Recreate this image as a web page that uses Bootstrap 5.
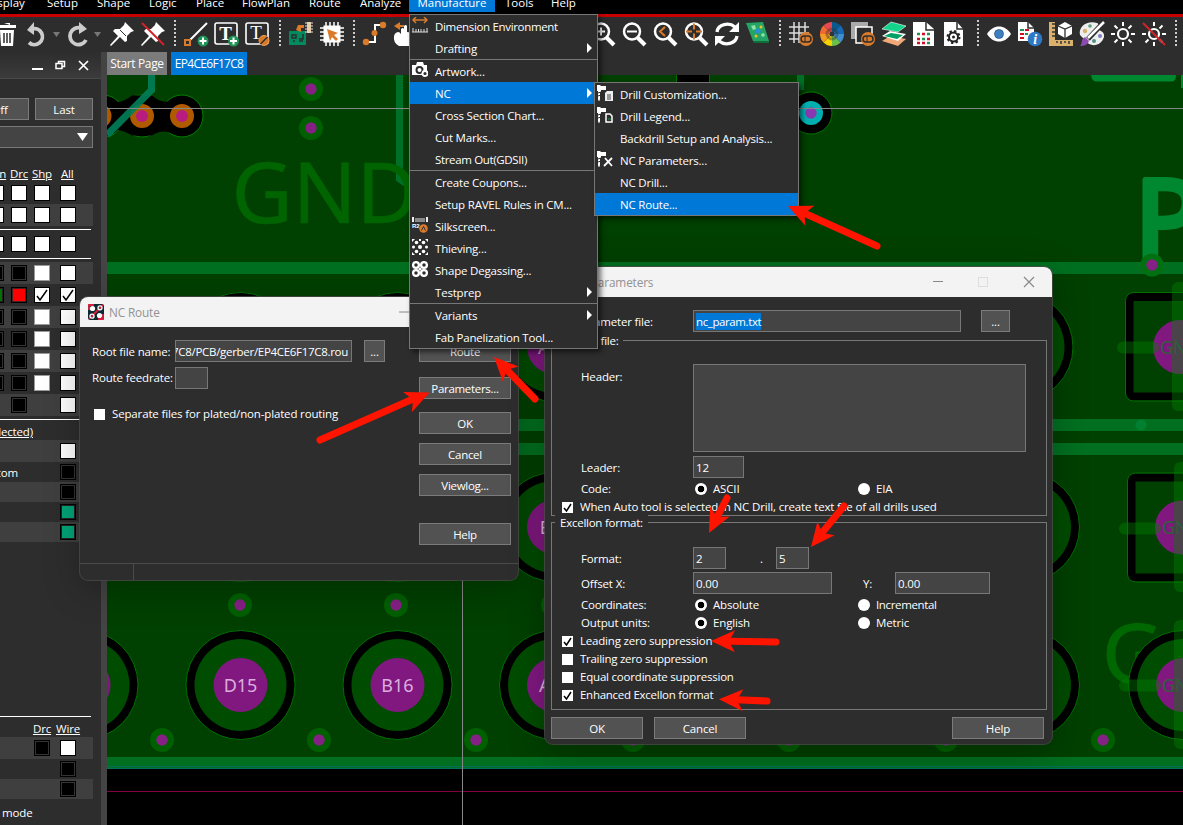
<!DOCTYPE html>
<html lang="en">
<head>
<meta charset="utf-8">
<title>PCB Editor</title>
<link href="https://cdn.jsdelivr.net/npm/bootstrap@5.3.0/dist/css/bootstrap.min.css" rel="stylesheet">
<style>
body{width:1183px;height:825px;overflow:hidden;background:#000;color:#fff;font:11.5px/16px "Open Sans","Noto Sans",sans-serif;letter-spacing:-.15px;position:relative}
.menubar{height:14px;background:#000;letter-spacing:0}
.menubar span{position:relative;top:-6px;white-space:nowrap;line-height:17px}
.menubar .hot{background:#0078d7;height:18px}
.redline{height:3px;background:#c80000}
.tools{height:35px;background:#2d2d2d;padding-top:5px;overflow:hidden}
.tools svg{width:24px;height:24px;margin:0 4px 0 3px;flex:none;overflow:visible}
.dots{width:12px;height:26px;flex:none;margin-top:-2px;background:repeating-linear-gradient(#ccc 0 2px,transparent 2px 4px) 5px 0/2px 26px no-repeat}
.caret{flex:none;height:6px;margin-top:10px;background:linear-gradient(#777,#777) no-repeat;clip-path:polygon(0 0,7px 0,3.5px 5px)}
.side{width:101px;background:#2d2d2d;overflow:hidden;flex:none}
.splitter{width:6px;background:#444;flex:none}
.sidehead{height:27px;background:linear-gradient(#2d2d2d,#3b3b3b);border-bottom:1px solid #484848}
.box{border:1px solid #777;background:#444;height:22px;overflow:hidden;white-space:nowrap;line-height:22px;color:#fff}
.push{border:1px solid #7b7b7b;background:#525252;height:22px;line-height:22px;text-align:center;color:#fff;flex:none}
.lay{height:22px;width:93px;display:flex;align-items:center;overflow:hidden;position:relative}
.lay.s{height:20px}.lay.alt{background:#3f3f3f}
.cells{display:grid;grid-template-columns:23px 23px 26px 16px;margin-left:-12px}
.cells i{width:16px;height:16px;display:block;border:1px solid #000;background:#fff;color:#000}
.cells i.k{background:#000;box-shadow:inset 0 0 0 1px #333}
.cells i.g{border-color:#999}
.cells i.r{background:red;box-shadow:inset 0 0 0 1px #422}
.cells i.gr{background:#007000;box-shadow:inset 0 0 0 1px #222}
.cells i.t{background:#00a478;box-shadow:inset 0 0 0 1px #222}
.cells i.n{visibility:hidden}
.cells svg{display:block}
.rule{height:1px;background:#fff;width:91px}
.work{min-width:0}
.tabs{height:23px;background:#2d2d2d;gap:4px;line-height:24px;font-size:12px;white-space:nowrap}
.tabs div{text-align:center;letter-spacing:-.35px}
.tabs div+div{letter-spacing:-.7px}
.win{position:absolute;background:#2d2d2d;border-radius:8px;box-shadow:0 0 0 1px #4a4a4acc,0 8px 36px rgba(0,0,0,.28)}
.cap{height:30px;background:#f3f3f3;border-radius:8px 8px 0 0;color:#929292;font-size:11.8px}
.chk{width:11px;height:11px;background:#fff;flex:none;color:#000;display:block}
.rad{width:12px;height:12px;border-radius:50%;background:#fff;flex:none;display:block}
.rad.on{background:radial-gradient(circle,#000 0 3px,#fff 3.6px)}
.fs{border:1px solid #777;position:relative}
.fs>b{position:absolute;top:-8px;background:#2d2d2d;font-weight:400;padding:0 5px;white-space:nowrap;letter-spacing:-.25px}
.line{display:grid;align-items:center;white-space:nowrap}
.fld>span{padding-top:1px}
.opt{gap:7px;height:18px;letter-spacing:-.2px}
.pop{position:absolute;background:#2d2d2d;border:1px solid #777;box-shadow:3px 3px 5px rgba(0,0,0,.55)}
.it{height:22px;display:flex;align-items:center;white-space:nowrap;position:relative;letter-spacing:-.2px;padding-top:2px}
.it svg{width:16px;height:16px;margin:-4px 7px 0 2px;flex:none}
.it.p{padding-left:25px}
.it.hot{background:#0078d7}
.it.sub::after{content:"";margin-left:auto;margin-right:5px;margin-top:-3px;border:5px solid transparent;border-left-color:#fff;border-right:0}
.sep{height:1px;background:#777}
.over{position:absolute;left:0;top:0;pointer-events:none}
</style>
</head>
<body class="d-flex flex-column">
<nav class="menubar d-flex flex-none">
<span style="width:47px;margin-left:-14px">Display</span><span style="width:50px;margin-left:14px">Setup</span><span style="width:52px">Shape</span><span style="width:47px">Logic</span><span style="width:46px">Place</span><span style="width:67px">FlowPlan</span><span style="width:51px">Route</span><span style="width:49px">Analyze</span><span class="hot text-center" style="width:86px">Manufacture</span><span style="margin-left:10px;width:46px">Tools</span><span>Help</span>
</nav>
<div class="redline"></div>
<div class="tools d-flex">
<svg viewBox="0 0 24 24" style="margin-left:-5px;margin-right:3px"><path d="M3 3h18v3H3zM9 1h6v2M5 8h14l-1 16H6z" fill="#fff"/><path d="M9 11v10M12 11v10M15 11v10" stroke="#2d2d2d" stroke-width="1.5"/></svg>
<svg viewBox="0 0 24 24"><path d="M4 20.500A8 8 0 1 0 7 7" fill="none" stroke="#ccc" stroke-width="3.800"/><path d="M9 0v13L2 8z" fill="#ccc"/></svg>
<div class="caret" style="width:10px"></div>
<svg viewBox="0 0 24 24"><path d="M20 18A8.500 8.500 0 1 1 15 6" fill="none" stroke="#ccc" stroke-width="3.800"/><path d="M13 0v12l8-5z" fill="#ccc"/></svg>
<div class="caret" style="width:13px"></div>
<svg viewBox="0 0 24 24"><path d="M15 0l9 9-3 1-4 4v5l-2 1-5-5-9 9-1-1 8-9-5-5 2-2h5l4-4z" fill="#fff"/><path d="M10 8l6 6" stroke="#2d2d2d"/></svg>
<svg viewBox="0 0 24 24"><path d="M15 0l9 9-3 1-4 4v5l-2 1-5-5-9 9-1-1 8-9-5-5 2-2h5l4-4z" fill="#fff"/><path d="M1 1l22 22" stroke="#d2232a" stroke-width="2"/></svg>
<div class="dots"></div>
<svg viewBox="0 0 24 24"><path d="M3 21L23 1" stroke="#fff" stroke-width="2"/><path d="M1 18h5v5H1z" fill="#2d2d2d" stroke="#d97b2b" stroke-width="2"/><circle cx="19" cy="19" r="5.5" fill="#1e9356"/><path d="M15.5 19h7M19 15.500v7" stroke="#fff" stroke-width="2"/></svg>
<svg viewBox="0 0 24 24"><rect x="0" y="1" width="22" height="21" rx="2" fill="none" stroke="#fff" stroke-width="1.600"/><text x="10.500" y="18" text-anchor="middle" font-family="Liberation Serif" font-weight="bold" font-size="19" fill="#fff">T</text><circle cx="18.500" cy="19" r="5.500" fill="#1e9356"/><path d="M15 19h7M18.500 15.500v7" stroke="#fff" stroke-width="2"/></svg>
<svg viewBox="0 0 24 24"><rect x="0" y="1" width="22" height="21" rx="2" fill="none" stroke="#fff" stroke-width="1.600"/><text x="10" y="17" text-anchor="middle" font-family="Liberation Serif" font-size="19" fill="#fff">T</text><circle cx="18" cy="18.500" r="5" fill="#d97b2b" stroke="#f0a050"/><path d="M14.500 22l7-7" stroke="#2d2d2d" stroke-width="1.500"/></svg>
<div class="dots"></div>
<svg viewBox="0 0 24 24"><path d="M0 9h17v14H0z" fill="#008a5e"/><path d="M3 13h4v3H3zM10 19h4M14 12v5h-4M5 20v-2" fill="none" stroke="#2d2d2d" stroke-width="1.500"/><path d="M7 8l2-5h6v3h-3v4z" fill="#d97b2b"/><path d="M18 0h4v11h-4z" fill="#e8c890"/><path d="M16 1h8M16 4h8M16 7h8M16 10h8" stroke="#ddd"/></svg>
<svg viewBox="0 0 24 24"><path d="M3.500 3.500h17v17h-17z" fill="#fff"/><path d="M6 0v24M10 0v24M14 0v24M18 0v24M0 6h24M0 10h24M0 14h24M0 18h24" stroke="#fff" stroke-width="1.500"/><path d="M7 7l11 4-4 2 4 4-2 2-4-4-2 4z" fill="#d97b2b"/></svg>
<div class="dots"></div>
<svg viewBox="0 0 24 24"><path d="M3 20h9V11V3h8" fill="none" stroke="#fff" stroke-width="2"/><g fill="#d97b2b"><circle cx="3" cy="20" r="3.200"/><circle cx="11.500" cy="11" r="3"/><circle cx="20" cy="3" r="3.200"/></g></svg>
<svg viewBox="0 0 24 24"><path d="M0 4l6-4v3h4v2H6v3z" fill="#d97b2b"/><path d="M7 12V7q2-2 3 0v-3q2-2 3 0v6l8 1v13H5Q-1 21 0 14q1-4 5-4z" fill="#fff"/></svg>
<div style="width:166px" class="flex-shrink-0"></div>
<svg viewBox="0 0 24 24"><circle cx="10" cy="9.500" r="8" fill="none" stroke="#fff" stroke-width="2.500"/><path d="M15 15l8 8" stroke="#fff" stroke-width="4"/><path d="M6 9.500h8M10 5.500v8" stroke="#fff" stroke-width="2"/></svg>
<svg viewBox="0 0 24 24"><circle cx="10" cy="9.500" r="8" fill="none" stroke="#fff" stroke-width="2.500"/><path d="M15 15l8 8" stroke="#fff" stroke-width="4"/><path d="M5 9.500h10" stroke="#fff" stroke-width="2"/></svg>
<svg viewBox="0 0 24 24"><circle cx="10" cy="9.500" r="8" fill="none" stroke="#fff" stroke-width="2.500"/><path d="M15 15l8 8" stroke="#fff" stroke-width="4"/><path d="M12 5L7 9.500l5 4.500" fill="none" stroke="#d97b2b" stroke-width="2"/></svg>
<svg viewBox="0 0 24 24"><circle cx="10" cy="9.500" r="8" fill="none" stroke="#fff" stroke-width="2.500"/><path d="M15 15l8 8" stroke="#fff" stroke-width="4"/><path d="M2 9.500h6M12 9.500h6M10 1.500v6M10 11.500v6" stroke="#d97b2b" stroke-width="2"/></svg>
<svg viewBox="0 0 24 24"><path d="M2 10c1-8 12-10 18-5M22 14c-1 8-12 10-18 5" fill="none" stroke="#fff" stroke-width="3.300"/><path d="M24 0v10H14zM0 24V14h10z" fill="#fff"/></svg>
<svg viewBox="0 0 24 24"><path d="M0 1l17-1 6 19H7z" fill="#23a566"/><path d="M7 19h16v2H8z" fill="#136b3c"/><path d="M5 4l4-1 1 4-3 1zM15 12l3-1 1 3-3 1z" fill="#8fe0a8"/><circle cx="12" cy="9" r="2.500" fill="#2b8fd8"/><circle cx="10" cy="14" r="1.500" fill="#f0c020"/><circle cx="15" cy="5" r="1.500" fill="#f0c020"/></svg>
<div class="dots"></div>
<svg viewBox="0 0 24 24"><path d="M0 5h20M0 11h20M0 17h12M5 0v21M10 0v21M16 0v14" stroke="#ddd" stroke-width="1.500"/><circle cx="17" cy="17" r="7" fill="#d97b2b"/><rect x="12" y="14" width="10" height="6" rx="3" fill="none" stroke="#2d2d2d" stroke-width="1.500"/><path d="M16 14v6" stroke="#2d2d2d"/></svg>
<svg viewBox="0 0 24 24"><path d="M12 12V0A12 12 0 0 1 20.500 3.500z" fill="#0a5a90"/><path d="M12 12L20.500 3.500A12 12 0 0 1 24 12z" fill="#1769b3"/><path d="M12 12H24A12 12 0 0 1 20.500 20.500z" fill="#3e8fd0"/><path d="M12 12L20.500 20.500A12 12 0 0 1 12 24z" fill="#6cbf4a"/><path d="M12 12V24A12 12 0 0 1 3.500 20.500z" fill="#f5d400"/><path d="M12 12L3.500 20.500A12 12 0 0 1 0 12z" fill="#f59a23"/><path d="M12 12H0A12 12 0 0 1 3.500 3.500z" fill="#f06a30"/><path d="M12 12L3.500 3.500A12 12 0 0 1 12 0z" fill="#e84850"/><circle cx="12" cy="12" r="5" fill="none" stroke="#333" stroke-opacity=".4" stroke-width="3"/><circle cx="12" cy="12" r="2.500" fill="#333"/></svg>
<svg viewBox="0 0 24 24"><path d="M0 0h17v17H0z" fill="#aaa"/><path d="M5 5h16v16H5z" fill="#2d2d2d" stroke="#fff" stroke-width="1.500"/><circle cx="17" cy="17" r="7" fill="#d97b2b"/><rect x="12" y="14" width="10" height="6" rx="3" fill="none" stroke="#2d2d2d" stroke-width="1.500"/><path d="M16 14v6" stroke="#2d2d2d"/></svg>
<svg viewBox="0 0 24 24"><path d="M0 19l8-5 16 3-8 7z" fill="#f0a878"/><path d="M0 14l8-5 16 3-8 7z" fill="#fff"/><path d="M2 14l7-3 12 2-6 4z" fill="#00a065"/><path d="M0 7l9-7 15 4-8 6z" fill="#12d48a" stroke="#fff" stroke-width=".6"/></svg>
<svg viewBox="0 0 24 24"><path d="M0 0h13l8 7v17H0z" fill="#fff"/><path d="M13 0v8h8" fill="none" stroke="#2d2d2d" stroke-width="1.500"/><path d="M4 12h3M14 12h3M9 17h3" stroke="#1e9356" stroke-width="2.500"/><path d="M9 12h3M4 17h3M14 17h3M4 21h3M9 21h3" stroke="#d01020" stroke-width="2.500"/><path d="M14 21h3" stroke="#1e9356" stroke-width="2.500"/></svg>
<svg viewBox="0 0 24 24"><path d="M0 0h13l6 7v17H0z" fill="#fff"/><path d="M13 0v7h6" fill="none" stroke="#2d2d2d" stroke-width="1.500"/><circle cx="9.500" cy="15" r="4.500" fill="none" stroke="#222" stroke-width="2"/><circle cx="9.500" cy="15" r="6" fill="none" stroke="#222" stroke-width="2" stroke-dasharray="2.300 2.400"/><circle cx="9.500" cy="15" r="1.500" fill="#222"/></svg>
<div class="dots"></div>
<svg viewBox="0 0 24 24"><path d="M0 12C6 2 18 2 24 12 18 22 6 22 0 12" fill="#fff"/><circle cx="12" cy="12" r="4.800" fill="#1f4f80"/><circle cx="12" cy="12" r="4" fill="#3f7fc0"/></svg>
<svg viewBox="0 0 24 24"><path d="M0 0h10l6 6v13H0z" fill="#fff"/><path d="M10 0v6h6" fill="none" stroke="#2d2d2d" stroke-width="1.500"/><path d="M2 8h4M7 12h3" stroke="#1e9356" stroke-width="2"/><path d="M7 8h4M2 12h4M2 16h4" stroke="#d01020" stroke-width="2"/><circle cx="17" cy="17" r="7.300" fill="#2f78c4"/><text x="17" y="22" text-anchor="middle" font-family="Liberation Serif" font-style="italic" font-weight="bold" font-size="14" fill="#fff">i</text></svg>
<svg viewBox="0 0 24 24"><path d="M0 0h6v18h18v6H0z" fill="#d9b06c"/><path d="M3 2h3M3 6h3M3 10h3M3 14h3M8 19v2M12 19v3M16 19v2M20 19v3" stroke="#333" stroke-width="1.500"/><path d="M16 0l7 4v8l-7 4-7-4V4z" fill="#fff"/><path d="M9 4l7 3 7-3M16 7v9" fill="none" stroke="#2d2d2d" stroke-width="1.300"/></svg>
<svg viewBox="0 0 24 24"><path d="M0 13C-2 4 8-2 17 1c3 1 0 4 1 6s7 2 6 8c-2 7-9 10-15 7z" fill="#eee"/><circle cx="5" cy="9" r="2.200" fill="#d9b06c"/><circle cx="10" cy="4" r="1.800" fill="#60a080"/><circle cx="14" cy="19" r="2" fill="#509080"/><circle cx="20" cy="14" r="2" fill="#8080c0"/><path d="M24 0L8 17" stroke="#2d2d2d" stroke-width="5"/><path d="M24 0L8 16" stroke="#fff" stroke-width="2.500"/><path d="M0 24c3-3 0-6 5-9l4 4c-1 4-5 5-9 5" fill="#8b4bb0"/></svg>
<svg viewBox="0 0 24 24"><circle cx="12" cy="12" r="5" fill="none" stroke="#fff" stroke-width="2.200"/><path d="M12 0v4M12 20v4M0 12h4M20 12h4M3.500 3.500l3 3M17.500 17.500l3 3M3.500 20.500l3-3M17.500 6.500l3-3" stroke="#fff" stroke-width="2"/></svg>
<svg viewBox="0 0 24 24"><circle cx="12" cy="12" r="5" fill="none" stroke="#fff" stroke-width="2.200"/><path d="M12 0v4M12 20v4M0 12h4M20 12h4M17.500 17.500l3 3M3.500 20.500l3-3M17.500 6.500l3-3" stroke="#fff" stroke-width="2"/><path d="M1 1l22 22" stroke="#d2232a" stroke-width="2"/></svg>
<div class="dots"></div>
</div>

<main class="d-flex flex-grow-1" style="min-height:0">
<aside class="side">
<div class="sidehead"><svg width="101" height="26"><path d="M32 17h11" stroke="#fff" stroke-width="2"/><path d="M56 11.500h6v5h-6zM58.500 11V9.500h6v5H62" fill="none" stroke="#fff" stroke-width="1.500"/><path d="M79 9l9 9M88 9l-9 9" stroke="#fff" stroke-width="1.700"/></svg></div>
<div class="d-flex" style="padding-top:19px;gap:6px"><div class="push" style="width:59px;margin-left:-30px">Off</div><div class="push" style="width:58px">Last</div></div>
<div class="box" style="width:103px;margin:6px 0 0 -10px"><svg width="101" height="20" class="d-block"><path d="M86 6h11l-5.500 8z" fill="#fff"/></svg></div>
<div class="d-flex text-decoration-underline" style="height:34px;padding-top:18px"><span style="width:17px;margin-left:-7px">En</span><span style="width:22px">Drc</span><span style="width:29px">Shp</span><span>All</span></div>
<div class="lay"><div class="cells"><i></i><i></i><i></i><i></i></div></div>
<div class="lay alt"><div class="cells"><i></i><i></i><i></i><i></i></div></div>
<div class="rule" style="margin:3px 0"></div>
<div class="lay"><div class="cells"><i></i><i></i><i></i><i></i></div></div>
<div class="rule" style="margin:3px 0"></div>
<div class="lay alt"><div class="cells"><i class="k"></i><i class="k"></i><i class="g"></i><i></i></div></div>
<div class="lay"><div class="cells"><i class="gr"></i><i class="r"></i><i><svg width="14" height="14"><path d="M2 8l3 4 7-10" fill="none" stroke="#000" stroke-width="1.500"/></svg></i><i><svg width="14" height="14"><path d="M2 8l3 4 7-10" fill="none" stroke="#000" stroke-width="1.500"/></svg></i></div></div>
<div class="lay alt"><div class="cells"><i class="k"></i><i class="k"></i><i class="g"></i><i></i></div></div>
<div class="lay"><div class="cells"><i class="k"></i><i class="k"></i><i class="g"></i><i></i></div></div>
<div class="lay alt"><div class="cells"><i class="k"></i><i class="k"></i><i class="g"></i><i></i></div></div>
<div class="lay"><div class="cells"><i class="k"></i><i class="k"></i><i class="g"></i><i></i></div></div>
<div class="lay alt"><div class="cells"><i class="n"></i><i class="k"></i><i class="n"></i><i></i></div></div>
<div class="rule" style="margin:3px 0 2px"></div>
<div class="text-decoration-underline" style="height:18px;line-height:20px;width:33px;direction:rtl;white-space:nowrap"><bdi dir="ltr">(Selected)</bdi></div>
<div class="lay alt"><div class="cells"><i class="n"></i><i class="n"></i><i class="n"></i><i></i></div></div>
<div class="lay s"><div class="cells"><i class="n"></i><i class="n"></i><i class="n"></i><i class="k"></i></div><span class="position-absolute" style="right:75px;top:3px">Bottom</span></div>
<div class="lay s alt"><div class="cells"><i class="n"></i><i class="n"></i><i class="n"></i><i class="k"></i></div></div>
<div class="lay s"><div class="cells"><i class="n"></i><i class="n"></i><i class="n"></i><i class="t"></i></div></div>
<div class="lay s alt"><div class="cells"><i class="n"></i><i class="n"></i><i class="n"></i><i class="t"></i></div></div>
<div class="rule" style="margin:174px 0 4px"></div>
<div class="d-flex text-decoration-underline" style="height:16px;padding-left:33px"><span style="width:23px">Drc</span><span>Wire</span></div>
<div class="lay alt"><div class="cells"><i class="n"></i><i class="n"></i><i class="k"></i><i></i></div></div>
<div class="lay s"><div class="cells"><i class="n"></i><i class="n"></i><i class="n"></i><i class="k"></i></div></div>
<div class="lay s alt"><div class="cells"><i class="n"></i><i class="n"></i><i class="n"></i><i class="k"></i></div></div>
<div style="padding:6px 0 0 2px">mode</div>
</aside>
<div class="splitter"></div>
<section class="work flex-grow-1">
<div class="tabs d-flex"><div style="width:60px;background:#7b7b7b">Start Page</div><div style="width:76px;background:#0078d7">EP4CE6F17C8</div></div>
<svg class="d-block" width="1076" height="750" viewBox="107 75 1076 750" font-family="Noto Sans" letter-spacing="0">
<defs>
<g id="ring"><circle r="54.500" fill="#000" stroke="#007000"/><circle r="46" fill="#004c00"/><circle r="27" fill="#801880"/></g>
<g id="via"><circle r="12" fill="#006000"/><circle r="5.700" fill="#852085"/></g>
</defs>
<rect x="107" y="75" width="1076" height="694" fill="#004000"/>
<path d="M107 268H1183M107 425H1183M107 449H1183M107 763H1183" stroke="#007020" stroke-width="12"/>
<path d="M107 768.500H1183M107 766.500H1183" stroke="#00705a"/>
<path d="M107 791.500H1183" stroke="#800040"/>
<g fill="#000" stroke="#008000" stroke-width="1"><circle cx="103" cy="116" r="21"/><circle cx="142" cy="116" r="21"/><circle cx="182" cy="116" r="21"/></g>
<path d="M107 102.500q14 2 25-7h20q10 9 20 5h10v33h-10q-10-5-20 2h-20q-12-8-25-5z" fill="#000"/>
<g fill="#b05a00"><circle cx="99.500" cy="116" r="12"/><circle cx="142" cy="116" r="12"/><circle cx="182" cy="116" r="12"/></g>
<path d="M151.500 75v15L107 135" stroke="#00805a" stroke-opacity=".9" stroke-width="7" fill="none"/>
<circle cx="142" cy="116" r="6" fill="#b81c80"/><circle cx="182" cy="116" r="6" fill="#b81c80"/>
<use href="#via" x="311" y="89"/><use href="#via" x="311" y="128"/>
<path d="M399.500 75v104l6 4" stroke="#007028" stroke-width="7" fill="none"/><path d="M800.500 75v15" stroke="#007028" stroke-width="7"/>
<text x="231.500" y="223" font-size="84" fill="#006400" stroke="#006400" stroke-width=".5">GND</text>
<rect x="676.500" y="70" width="33" height="13" fill="#000" stroke="#007000"/>
<circle cx="811" cy="113" r="21" fill="#000" stroke="#007000"/><circle cx="811" cy="113" r="12" fill="#00b0b0"/><circle cx="811" cy="113" r="5.700" fill="#8838b0"/>
<path d="M1091 75h85q0 6-4 6.500h-76q-4 0-5-6.500M1181 75h2v13h-2z" fill="#008830"/>
<text x="1135" y="257" font-size="108" fill="#008830" stroke="#008830" stroke-width="6" stroke-linejoin="round">P</text>
<circle cx="1152" cy="265" r="11.500" fill="#007010"/><circle cx="1152" cy="265" r="5.700" fill="#852085"/>
<path d="M107 108.500H1183" stroke="#888"/>
<use href="#ring" x="240.500" y="347"/><use href="#ring" x="397.500" y="347"/><use href="#ring" x="554" y="347"/><use href="#ring" x="1018.500" y="347"/>
<use href="#ring" x="240.500" y="527"/><use href="#ring" x="397.500" y="527"/><use href="#ring" x="554" y="527"/><use href="#ring" x="1025" y="527"/>
<use href="#ring" x="83.500" y="685"/><use href="#ring" x="240.500" y="685"/><use href="#ring" x="397.500" y="685"/><use href="#ring" x="554" y="685"/><use href="#ring" x="1025" y="685"/>
<g fill="#dcaede" font-size="18" text-anchor="middle"><text x="240.500" y="692">D15</text><text x="397.500" y="692">B16</text><text x="555" y="692">A15</text><text x="556" y="534">B14</text><text x="554" y="354">A14</text></g>
<use href="#via" x="240" y="605"/><use href="#via" x="396" y="605"/><use href="#via" x="553" y="605"/>
<use href="#via" x="162" y="740"/><use href="#via" x="319" y="740"/><use href="#via" x="476" y="740"/><use href="#via" x="633" y="740"/><use href="#via" x="789" y="740"/><use href="#via" x="946" y="740"/><use href="#via" x="1103" y="740"/>
<circle cx="1141" cy="425" r="5.500" fill="#008030"/>
<g fill="#004000" stroke="#000" stroke-width="8"><rect x="1129.500" y="297" width="100" height="99.500" rx="3"/><rect x="1131.500" y="477.500" width="100" height="100" rx="3"/></g>
<g fill="none" stroke="#007000"><rect x="1125.500" y="292.500" width="100" height="108.500" rx="8"/><rect x="1127.500" y="473" width="100" height="109" rx="8"/></g>
<text x="1102" y="683" font-size="83" fill="#006800" stroke="#006800">G</text>
<use href="#ring" x="1183" y="685"/>
<circle cx="1180" cy="347" r="27" fill="#801880"/><circle cx="1182" cy="527.500" r="27" fill="#801880"/>
<g stroke="#008000" stroke-opacity=".42" stroke-width="12" stroke-linecap="round"><path d="M1123 347.500h30M1125 528.500h30M1125 685.500h30" /></g>
<g fill="#008000" fill-opacity=".42"><rect x="1172" y="282" width="20" height="129" rx="6"/><rect x="1174" y="462" width="20" height="130" rx="6"/><rect x="1174" y="620" width="20" height="129" rx="6"/></g>
<g fill="#2c603c" font-size="18"><text x="1160" y="354">GND</text><text x="1162" y="534">GND</text><text x="1162" y="692">GND</text></g>
<path d="M462.500 75v750" stroke="#888"/>
</svg>
</section>
</main>

<!-- NC Route dialog -->
<div class="win" style="left:80px;top:297px;width:438px;height:283px">
<div class="cap d-flex align-items-center" style="padding-left:8px;gap:5px"><svg width="16" height="16" viewBox="0 0 16 16"><rect width="16" height="16" rx="2" fill="#0b2a33"/><path d="M1 15L15 1M1 6V1h5M15 10v5h-5" stroke="#d8203c" stroke-width="1.800" fill="none"/><circle cx="4.500" cy="4.500" r="2.600" fill="#fff"/><circle cx="11.500" cy="11.500" r="2.600" fill="#fff"/><circle cx="12" cy="3.800" r="2" fill="none" stroke="#fff" stroke-width="1.300"/><circle cx="4" cy="12.200" r="2" fill="none" stroke="#fff" stroke-width="1.300"/></svg><span style="width:52px">NC Route</span><svg width="11" height="2" style="margin-left:233px"><path d="M0 1h11" stroke="#888"/></svg></div>
<div class="d-flex justify-content-between" style="padding:13px 7px 0 12px;height:236px">
<div>
<div class="line fld" style="grid-template-columns:83px 177px 12px 21px;height:22px;margin-bottom:5px"><span>Root file name:</span><div class="box d-flex justify-content-end" style="padding-right:3px;letter-spacing:-.3px">17C8/PCB/gerber/EP4CE6F17C8.rou</div><span></span><div class="push">...</div></div>
<div class="line" style="grid-template-columns:83px 33px;height:22px"><span>Route feedrate:</span><div class="box"></div></div>
<div class="d-flex align-items-center" style="gap:7px;margin:17px 0 0 2px"><i class="chk"></i><span>Separate files for plated/non-plated routing</span></div>
</div>
<div class="d-flex flex-column" style="width:92px;letter-spacing:-.3px"><div class="push">Route</div><div class="push" style="margin-top:15px">Parameters...</div><div class="push" style="margin-top:13px">OK</div><div class="push" style="margin-top:9px">Cancel</div><div class="push" style="margin-top:9px">Viewlog...</div><div class="push" style="margin-top:27px">Help</div></div>
</div>
<div style="border-top:1px solid #4b4b4b;height:17px"><div style="width:54px;height:16px;border-right:1px solid #4b4b4b"></div></div>
</div>

<!-- NC Parameters dialog -->
<div class="win" style="left:545px;top:267px;width:507px;height:477px">
<div class="cap d-flex align-items-center" style="padding-left:27px"><span>NC Parameters</span><svg class="ms-auto" width="119" height="30"><path d="M0 14.500h10" stroke="#888"/><rect x="45.500" y="10.500" width="9" height="9" fill="none" stroke="#ddd"/><path d="M91 10l10 10M101 10l-10 10" stroke="#888" stroke-width="1.200"/></svg></div>
<div style="padding:13px 5px 0 6px">
<div class="line fld" style="grid-template-columns:102px 40px 268px 20px 29px;height:22px"><span class="text-end">Parameter file:</span><span></span><div class="box" style="padding:0 2px;letter-spacing:-.4px"><span style="background:#0078d7;padding:1px 0">nc_param.txt</span></div><span></span><div class="push">...</div></div>
<div class="fs" style="height:176px;margin-top:8px;padding:23px 0 0 10px"><b style="left:4px">Output file:</b>
<div class="d-flex"><span style="width:131px;padding:5px 0 0 19px">Header:</span><div class="box" style="width:333px;height:88px"></div></div>
<div class="line fld" style="grid-template-columns:131px 51px;height:22px;margin-top:4px"><span style="padding-left:19px">Leader:</span><div class="box" style="padding-left:2px">12</div></div>
<div class="line" style="grid-template-columns:133px 18px 145px 18px auto;justify-content:start;height:22px"><span style="padding-left:19px">Code:</span><i class="rad on"></i><span>ASCII</span><i class="rad"></i><span>EIA</span></div>
<div class="opt d-flex align-items-center" style="height:14px;letter-spacing:-.15px"><i class="chk"><svg class="d-block" width="11" height="11"><path d="M2 6l2.500 3L9 2" fill="none" stroke="#000" stroke-width="1.500"/></svg></i><span class="text-nowrap">When Auto tool is selected in NC Drill, create text file of all drills used</span></div>
</div>
<div class="fs" style="height:188px;margin-top:6px;padding:24px 0 0 10px"><b style="left:3px">Excellon format:</b>
<div class="line fld" style="grid-template-columns:131px 33px 50px 33px;height:22px"><span style="padding-left:19px">Format:</span><div class="box" style="padding-left:2px">2</div><span style="padding-left:34px">.</span><div class="box" style="padding-left:2px">5</div></div>
<div class="line fld" style="grid-template-columns:131px 139px 31px 32px 95px;height:22px;margin-top:3px"><span style="padding-left:19px">Offset X:</span><div class="box" style="padding-left:2px">0.00</div><span></span><span>Y:</span><div class="box" style="padding-left:2px">0.00</div></div>
<div class="line" style="grid-template-columns:133px 18px 145px 18px auto;justify-content:start;height:18px;margin-top:2px"><span style="padding-left:19px;letter-spacing:-.25px">Coordinates:</span><i class="rad on"></i><span>Absolute</span><i class="rad"></i><span style="letter-spacing:-.35px">Incremental</span></div>
<div class="line" style="grid-template-columns:133px 18px 145px 18px auto;justify-content:start;height:18px"><span style="padding-left:19px">Output units:</span><i class="rad on"></i><span>English</span><i class="rad"></i><span>Metric</span></div>
<div class="opt d-flex align-items-center"><i class="chk"><svg class="d-block" width="11" height="11"><path d="M2 6l2.500 3L9 2" fill="none" stroke="#000" stroke-width="1.500"/></svg></i><span>Leading zero suppression</span></div>
<div class="opt d-flex align-items-center"><i class="chk"></i><span style="letter-spacing:-.28px">Trailing zero suppression</span></div>
<div class="opt d-flex align-items-center"><i class="chk"></i><span>Equal coordinate suppression</span></div>
<div class="opt d-flex align-items-center"><i class="chk"><svg class="d-block" width="11" height="11"><path d="M2 6l2.500 3L9 2" fill="none" stroke="#000" stroke-width="1.500"/></svg></i><span style="letter-spacing:-.27px">Enhanced Excellon format</span></div>
</div>
<div class="d-flex" style="margin-top:7px;gap:11px;padding-right:3px"><div class="push" style="width:92px">OK</div><div class="push" style="width:92px">Cancel</div><div class="push ms-auto" style="width:92px">Help</div></div>
</div>
</div>

<!-- Manufacture menu -->
<div class="pop" style="left:409px;top:14px;width:189px;height:335px">
<div class="it" style="letter-spacing:-.33px"><svg viewBox="0 0 16 16"><path d="M1 3h14M4 0L1 3l3 3M12 0l3 3-3 3" fill="none" stroke="#d97b2b" stroke-width="1.500"/><path d="M0 15h16M1 11v4M4 12v3M6.500 12v3M9 12v3M12 12v3M15 11v4" stroke="#ddd"/></svg>Dimension Environment</div>
<div class="it p sub">Drafting</div><div class="sep"></div>
<div class="it"><svg viewBox="0 0 16 16"><path d="M0 3h4l1-3h6l1 3h3v10H0z" fill="#fff"/><circle cx="7.500" cy="8" r="3" fill="none" stroke="#2d2d2d" stroke-width="2"/><circle cx="13" cy="11.500" r="2.500" fill="#2d2d2d" stroke="#fff" stroke-width="1.800"/></svg>Artwork...</div>
<div class="it p hot sub">NC</div><div class="it p">Cross Section Chart...</div><div class="it p">Cut Marks...</div><div class="it p" style="letter-spacing:-.35px">Stream Out(GDSII)</div><div class="sep"></div>
<div class="it p">Create Coupons...</div><div class="it p">Setup RAVEL Rules in CM...</div>
<div class="it"><svg viewBox="0 0 16 16"><path d="M3 1h10v4H3z" fill="#888"/><path d="M1 0v5M15 0v5" stroke="#eee" stroke-width="2"/><text x="0" y="11" font-size="6" font-weight="bold" font-family="Liberation Sans" fill="#fff">R2</text><circle cx="11.500" cy="11.500" r="4.300" fill="#d97b2b"/><path d="M9.500 13.500l2-4 2 4" fill="none" stroke="#333"/></svg>Silkscreen...</div>
<div class="it"><svg viewBox="0 0 16 16" fill="#fff"><circle cx="4.500" cy="3.500" r="1.800"/><circle cx="11.500" cy="3.500" r="1.800"/><circle cx="8" cy="8" r="2"/><circle cx="1.500" cy="8" r="1.500"/><circle cx="14.500" cy="8" r="1.500"/><circle cx="4.500" cy="12.500" r="1.800"/><circle cx="11.500" cy="12.500" r="1.800"/><path d="M0 0h3L0 3zM16 0v3l-3-3zM0 16v-3l3 3zM16 16h-3l3-3zM7 0h2v2H7zM7 14h2v2H7z"/></svg>Thieving...</div>
<div class="it"><svg viewBox="0 0 16 16"><g fill="#2d2d2d" stroke="#fff" stroke-width="2.300"><circle cx="4" cy="4" r="2.900"/><circle cx="12" cy="4" r="2.900"/><circle cx="4" cy="12" r="2.900"/><circle cx="12" cy="12" r="2.900"/></g><circle cx="8" cy="8" r="1.500" fill="#fff"/></svg>Shape Degassing...</div>
<div class="it p sub">Testprep</div><div class="sep"></div>
<div class="it p sub">Variants</div><div class="it p">Fab Panelization Tool...</div>
</div>
<div class="pop" style="left:594px;top:82px;width:205px;height:134px">
<div class="it"><svg viewBox="0 0 16 16"><path d="M0 0h3l1 1h5v4H4v2H3v7l-1 3-1-3V6H0z" fill="#fff"/><path d="M1 8l3-1M1 11l3-1" stroke="#2d2d2d"/><path d="M10 6h6v10H8V8z" fill="#eee"/><path d="M10 10h4M10 12h4M10 14h4" stroke="#444"/></svg>Drill Customization...</div>
<div class="it"><svg viewBox="0 0 16 16"><path d="M0 0h3l1 1h5v4H4v2H3v7l-1 3-1-3V6H0z" fill="#fff"/><path d="M1 8l3-1M1 11l3-1" stroke="#2d2d2d"/><path d="M9 7h4l2 2v6H9z" fill="#2d2d2d" stroke="#fff" stroke-width="1.500"/><path d="M11 12h3" stroke="#1e9356"/></svg>Drill Legend...</div>
<div class="it p">Backdrill Setup and Analysis...</div>
<div class="it"><svg viewBox="0 0 16 16"><path d="M0 0h3l1 1h5v4H4v2H3v7l-1 3-1-3V6H0z" fill="#fff"/><path d="M1 8l3-1M1 11l3-1" stroke="#2d2d2d"/><path d="M8 7l7 8M15 7l-8 8" stroke="#fff" stroke-width="1.800"/></svg>NC Parameters...</div>
<div class="it p">NC Drill...</div><div class="it p hot">NC Route...</div>
</div>

<!-- callout arrows -->
<svg class="over" width="1183" height="825" viewBox="0 0 1183 825">
<defs><path id="hd" d="M0 0L-24-11-18 0-24 11z" fill="#ff1400"/></defs>
<g stroke="#ff1400" stroke-width="7" stroke-linecap="round"><path d="M877 246L804 213M535 399L506 369M320 440L413 399M727 498L716 519M844 506L821 534M776 642L729 641.300M767 701L736 699.700"/></g>
<use href="#hd" transform="translate(788 206)rotate(204.200)"/><use href="#hd" transform="translate(494 357)rotate(225.700)"/><use href="#hd" transform="translate(429.500 392.500)rotate(-23.500)"/><use href="#hd" transform="translate(709 533)rotate(117)"/><use href="#hd" transform="translate(811 547)rotate(128.800)"/><use href="#hd" transform="translate(711 641)rotate(180.800)"/><use href="#hd" transform="translate(719 699.300)rotate(182)"/>
</svg>
<script src="https://cdn.jsdelivr.net/npm/bootstrap@5.3.0/dist/js/bootstrap.bundle.min.js"></script>
</body>
</html>
